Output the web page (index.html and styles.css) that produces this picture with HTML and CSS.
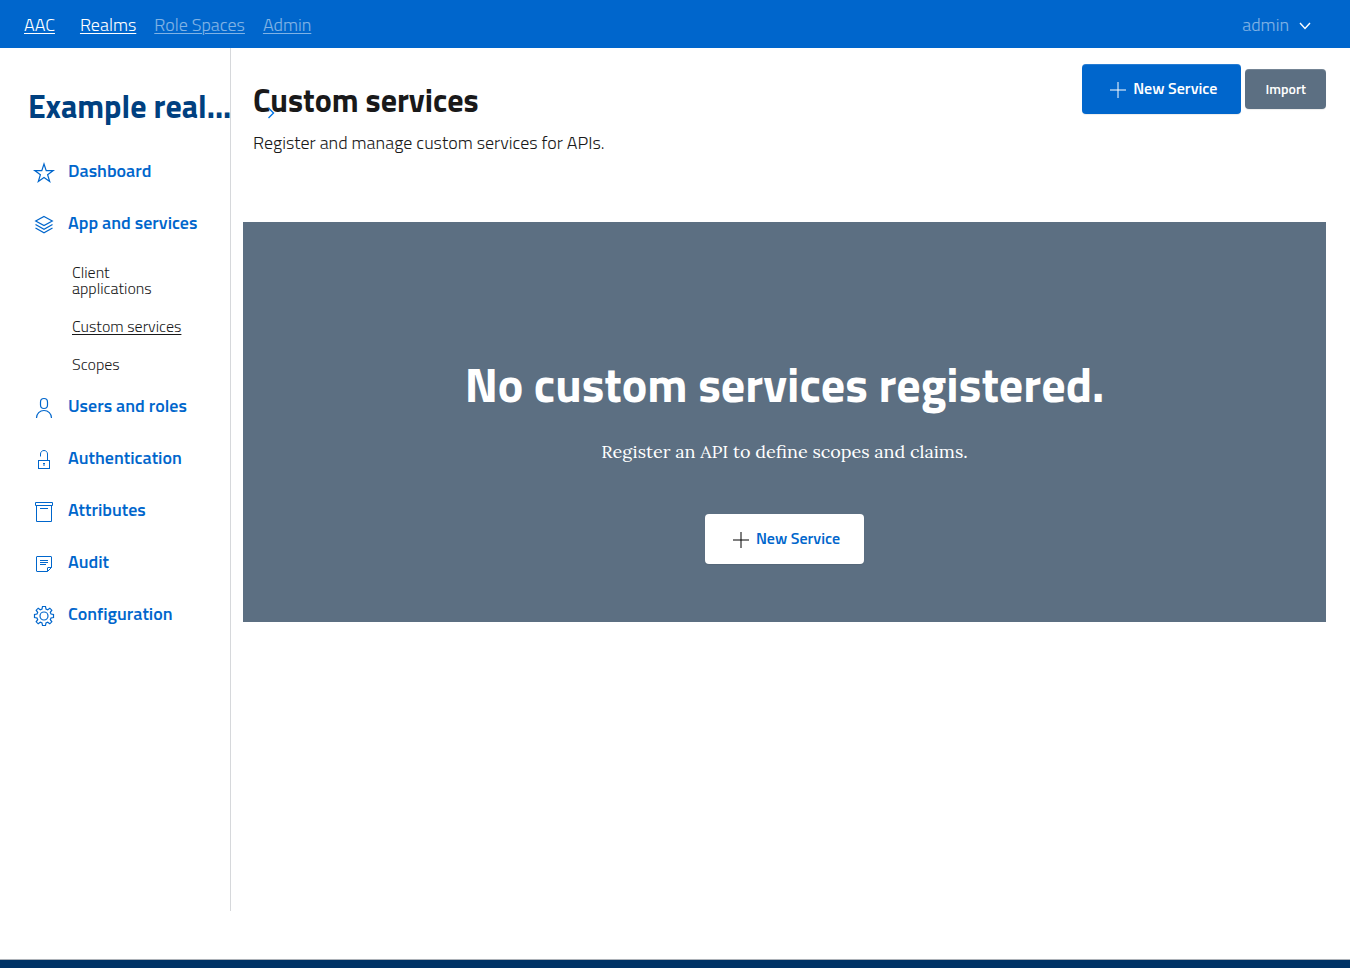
FILE: index.html
```html
<!DOCTYPE html>
<html lang="en">
<head>
<meta charset="utf-8">
<meta name="viewport" content="width=device-width, initial-scale=1">
<title>Custom services</title>
<link rel="stylesheet" href="styles.css">
</head>
<body>
<header class="topbar">
  <nav class="topnav" aria-label="Main">
    <a class="brand" href="#">AAC</a>
    <a class="toplink active" href="#">Realms</a>
    <a class="toplink" href="#">Role Spaces</a>
    <a class="toplink" href="#">Admin</a>
  </nav>
  <button class="user" type="button"><span class="user-name">admin</span>
    <svg class="caret" viewBox="0 0 12 8" aria-hidden="true"><path d="M1 1L6 6.500L11 1"/></svg>
  </button>
</header>
<div class="layout">
  <aside class="sidebar">
    <a class="realm" href="#">Example real...<svg class="realm-caret" viewBox="0 0 8 12" aria-hidden="true"><path d="M1.500 1L6.500 6L1.500 11"/></svg></a>
    <nav class="menu" aria-label="Realm">
      <a class="item" href="#"><svg class="icon" viewBox="0 0 24 24"><path class="bold" d="M12 3L14.200 9.600H21.200L15.600 13.700L17.700 20.500L12 16.400L6.300 20.500L8.400 13.700L2.800 9.600H9.800Z"/></svg>Dashboard</a>
      <a class="item" href="#"><svg class="icon" viewBox="0 0 24 24"><path class="bold" d="M12 3.500L20.300 8L12 12.500L3.700 8ZM3.500 11.500L12 16.200L20.500 11.500M3.500 15L12 19.700L20.500 15"/></svg>App and services</a>
      <div class="submenu">
        <a class="subitem" href="#">Client applications</a>
        <a class="subitem current" href="#">Custom services</a>
        <a class="subitem" href="#">Scopes</a>
      </div>
      <a class="item" href="#"><svg class="icon" viewBox="0 0 24 24"><g class="bold"><rect x="8.500" y="2.500" width="7" height="10" rx="3.500"/><path d="M4.500 22C4.500 17.500 7.800 14.500 12 14.500S19.500 17.500 19.500 22"/></g></svg>Users and roles</a>
      <a class="item" href="#"><svg class="icon" viewBox="0 0 24 24"><rect x="6.500" y="12.500" width="11" height="8"/><path d="M8.500 8.500V6C8.500 4 10 2.500 12 2.500S15.500 4 15.500 6V12.500M12 15V18M11 15.500H13"/></svg>Authentication</a>
      <a class="item" href="#"><svg class="icon" viewBox="0 0 24 24"><path d="M3.500 2.500H20.500V5.500H3.500ZM4.500 5.500V21.500H19.500V5.500M8 8.500H16"/></svg>Attributes</a>
      <a class="item" href="#"><svg class="icon" viewBox="0 0 24 24"><path d="M5 4.500H19Q19.500 4.500 19.500 5V15.500L15.500 19.500H5Q4.500 19.500 4.500 19V5Q4.500 4.500 5 4.500ZM15.500 19.500V16Q15.500 15.500 16 15.500H19.500M8 8.500H16M8 10.500H16M8 12.500H14"/></svg>Audit</a>
      <a class="item" href="#"><svg class="icon" viewBox="0 0 24 24"><g class="bold"><circle cx="12" cy="12" r="4"/><path d="M10.500 2.500H13.500L14 5L15.700 5.700L17.800 4.200L19.800 6.200L18.300 8.300L19 10L21.500 10.500V13.500L19 14L18.300 15.700L19.800 17.800L17.800 19.800L15.700 18.300L14 19L13.500 21.500H10.500L10 19L8.300 18.300L6.200 19.800L4.200 17.800L5.700 15.700L5 14L2.500 13.500V10.500L5 10L5.700 8.300L4.200 6.200L6.200 4.200L8.300 5.700L10 5Z"/></g></svg>Configuration</a>
    </nav>
  </aside>
  <main class="content">
    <div class="heading">
      <div class="heading-text">
        <h1 class="title">Custom services</h1>
        <p class="lead">Register and manage custom services for APIs.</p>
      </div>
      <div class="actions">
        <button class="btn primary" type="button"><svg class="plus" viewBox="0 0 24 24" aria-hidden="true"><path d="M12 4V20M4 12H20"/></svg>New Service</button>
        <button class="btn secondary" type="button">Import</button>
      </div>
    </div>
    <section class="hero">
      <h2 class="hero-title">No custom services registered.</h2>
      <p class="hero-text">Register an API to define scopes and claims.</p>
      <button class="btn light" type="button"><svg class="plus" viewBox="0 0 24 24" aria-hidden="true"><path d="M12 4V20M4 12H20"/></svg>New Service</button>
    </section>
  </main>
</div>
<footer class="footer"></footer>
</body>
</html>
```
FILE: styles.css
```css
* { box-sizing: border-box; }
body {
  margin: 0;
  min-height: 100vh;
  display: flex;
  flex-direction: column;
  background: #fff;
  color: #19191a;
  font-family: "Titillium Web", Roboto, sans-serif;
  font-size: 18px;
  line-height: 24px;
  font-weight: 300;
}
a { color: inherit; }
button { font-family: inherit; border: 0; cursor: pointer; }
svg { fill: none; stroke: currentColor; flex: none; }

.topbar {
  display: flex;
  justify-content: space-between;
  align-items: center;
  height: 48px;
  padding: 0 39px 0 24px;
  background: #06c;
  color: #fff;
}
.topnav { display: flex; gap: 18px; padding-top: 2px; }
.topnav a { text-underline-offset: 2px; text-decoration-thickness: 1px; }
.brand { margin-right: 7px; }
.toplink { opacity: .5; }
.toplink.active { opacity: 1; }
.user {
  display: flex;
  align-items: center;
  gap: 10px;
  padding: 0;
  background: none;
  color: #fff;
  font-size: 18px;
  font-weight: 300;
}
.user-name { opacity: .5; }
.caret { width: 12px; height: 8px; margin-top: 4px; stroke-width: 1.4; }

.layout { flex: 1; display: flex; margin-bottom: 48px; }
.sidebar { flex: none; width: 231px; border-right: 1px solid #d6d8db; }
.realm {
  position: relative;
  display: block;
  padding: 38px 0 18px 28px;
  margin-bottom: 1px;
  color: #004080;
  font-size: 32px;
  line-height: 40px;
  font-weight: 700;
  white-space: nowrap;
  text-decoration: none;
}
.realm-caret { position: absolute; left: 267px; top: 59px; width: 8px; height: 12px; color: #0073e6; stroke-width: 1.4; }
.item {
  display: flex;
  align-items: center;
  gap: 12px;
  height: 52px;
  padding-left: 32px;
  color: #06c;
  font-weight: 600;
  text-decoration: none;
}
.icon { width: 24px; height: 24px; margin-top: 4px; }
.bold { stroke-width: 1.2; }
.submenu {
  display: flex;
  flex-direction: column;
  align-items: flex-start;
  gap: 22px;
  padding: 15px 40px 8px 72px;
  font-size: 16px;
  line-height: 16px;
}
.subitem { text-decoration: none; }
.subitem.current { text-decoration: underline; text-underline-offset: 2px; }

.content { flex: 1; min-width: 0; padding: 16px 24px 0 12px; }
.heading { display: flex; justify-content: space-between; min-height: 158px; }
.heading-text { padding: 16px 0 0 10px; }
.title { margin: 0; font-size: 32px; line-height: 40px; font-weight: 700; }
.lead { margin: 11px 0 0; }
.actions { display: flex; align-items: center; align-self: flex-start; gap: 4px; }
.btn {
  display: inline-flex;
  align-items: center;
  justify-content: center;
  border-radius: 4px;
  font-weight: 600;
  font-size: 16px;
  line-height: 24px;
  color: #fff;
}
.primary, .light { gap: 3px; height: 50px; padding: 0 24px 2px; }
.primary { background: #06c; box-shadow: inset 0 1px 0 rgba(255, 255, 255, .15), 0 1px 1px rgba(0, 0, 0, .075); }
.secondary {
  height: 40px;
  padding: 0 20px;
  background: #5c6f82;
  font-size: 14px;
  box-shadow: inset 0 1px 0 rgba(255, 255, 255, .15), 0 1px 1px rgba(0, 0, 0, .075);
}
.light { background: #fff; color: #06c; box-shadow: 0 1px 1px rgba(0, 0, 0, .075); }
.plus { width: 24px; height: 24px; margin-top: 4px; }
.light .plus { color: #000; }

.hero {
  display: flex;
  flex-direction: column;
  align-items: center;
  justify-content: flex-end;
  min-height: 400px;
  padding: 58px 24px;
  background: #5c6f82;
  color: #fff;
  text-align: center;
}
.hero-title { margin: 0; font-size: 48px; line-height: 60px; font-weight: 700; }
.hero-text {
  margin: 25px 0 50px;
  font-family: Lora, "Liberation Serif", serif;
  font-size: 18px;
  font-weight: 400;
}
.footer { height: 9px; border-top: 1px solid #adb2b8; background: #036; }
```
